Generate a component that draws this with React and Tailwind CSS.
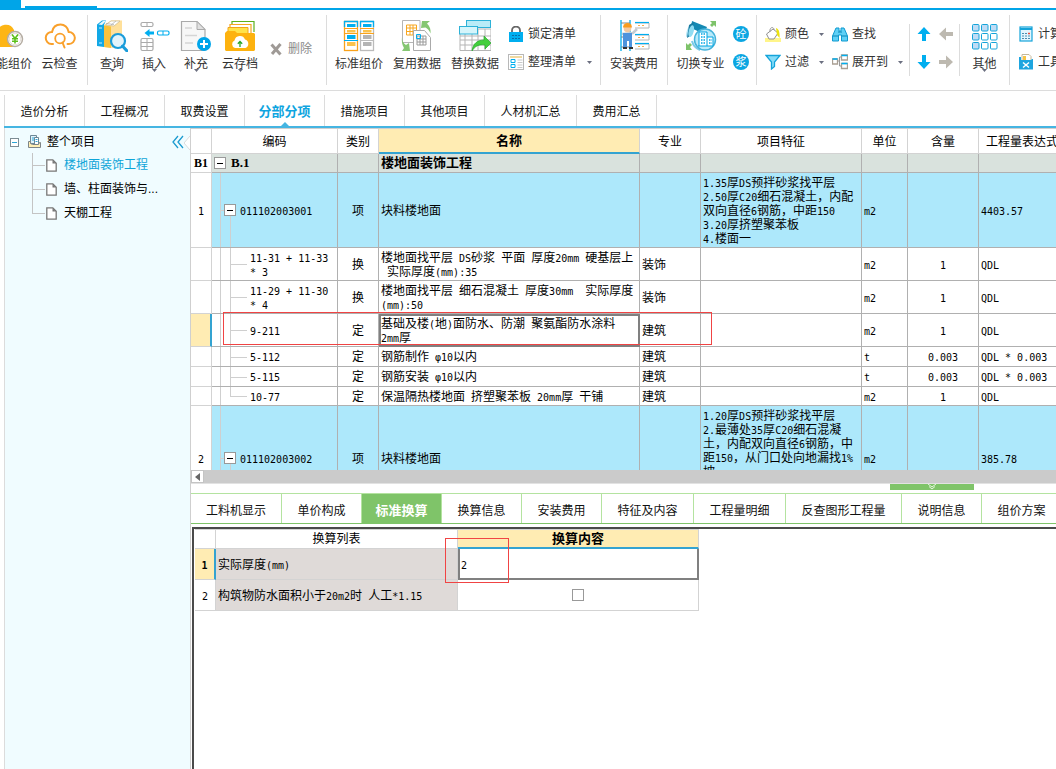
import React, { useState } from "react";

/* ---------- icons ---------- */

const Svg = ({ w = 32, h = 32, children }) => (
  <svg width={w} height={h} viewBox={`0 0 ${w} ${h}`} fill="none" aria-hidden="true" className="shrink-0">
    {children}
  </svg>
);

const SmartPriceIcon = () => (
  <Svg>
    <path d="M5 26a7 7 0 0 1 0-14 9 9 0 0 1 17-2v17H5z" fill="#fdb515" />
    <circle cx="23" cy="19" r="7.5" fill="#fff" stroke="#b5ada3" strokeWidth="1.5" />
    <circle cx="23" cy="19" r="5.8" stroke="#e5dfd8" />
    <path d="M20 14.5l3 4 3-4M23 18.5v5M20 18.8h6M20 21.2h6" stroke="#5cc01c" strokeWidth="1.6" />
  </Svg>
);

const CloudSearchIcon = () => (
  <Svg>
    <path d="M9 24H7.500a6 6 0 0 1 .5-12C9 7 12.500 4.500 16.500 4.500s7.500 3 8.200 7.500a6 6 0 0 1 .3 12h-1.500" stroke="#f9a02b" strokeWidth="2" strokeLinecap="round" />
    <circle cx="16" cy="18.500" r="4.800" stroke="#f9a02b" strokeWidth="1.800" />
    <path d="M18.500 22.500l2 5" stroke="#f9a02b" strokeWidth="2" strokeLinecap="round" />
  </Svg>
);

const BooksIcon = () => (
  <Svg>
    <path d="M1 4.500L6 0.500h4L8 5v22l-7-1z" fill="#12a8e6" />
    <path d="M2.500 4.500L7 1h3L6 5z" fill="#eaf7fd" />
    <path d="M3 8h3M3 23h3" stroke="#c9ecfb" />
    <path d="M8 5l7-4.500h11V24l-9 4-9-1z" fill="#ffe09a" />
    <path d="M9.500 5L15 1h9l-6 5z" fill="#fff" stroke="#c9b98e" strokeWidth="0.700" />
    <path d="M8 5.500l7 1V28l-7-1z" fill="#f9c23c" />
    <path d="M10 3.500l8 1M20 1l-5 4" stroke="#aaa" strokeWidth="0.700" />
    <circle cx="22" cy="21" r="7" fill="#e2f3fb" stroke="#1a9cda" strokeWidth="2.200" />
    <path d="M26.500 26l4.500 5" stroke="#1a9cda" strokeWidth="3" strokeLinecap="round" />
  </Svg>
);

const InsertIcon = () => (
  <Svg>
    <rect x="3" y="2.500" width="12" height="4" rx="1.500" stroke="#aaa" strokeWidth="1.200" />
    <path d="M9 2.500v4" stroke="#aaa" />
    <path d="M16 13H9" stroke="#00aeef" strokeWidth="3" />
    <path d="M6.500 13l5-4v8z" fill="#00aeef" />
    <rect x="19.500" y="11" width="11.500" height="4" rx="1.500" stroke="#00aeef" strokeWidth="1.200" />
    <path d="M25 11v4" stroke="#00aeef" />
    <rect x="3" y="18.500" width="12" height="12" rx="1.500" stroke="#aaa" strokeWidth="1.200" />
    <path d="M9 18.500v12M3 22.500h12M3 26.500h12" stroke="#aaa" />
  </Svg>
);

const SupplementIcon = () => (
  <Svg>
    <path d="M1.500 1.500H17l8 8v21H1.500z" fill="#f7f7f7" stroke="#aaa" strokeWidth="1.200" />
    <path d="M17 1.500v8h8z" fill="#e0e0e0" stroke="#aaa" />
    <path d="M5 8h7M5 15.500h12M5 23h8" stroke="#d5d5d5" strokeWidth="1.500" />
    <circle cx="24" cy="24" r="7" fill="#00a5ea" />
    <path d="M24 20v8M20 24h8" stroke="#fff" strokeWidth="2" />
  </Svg>
);

const CloudFolderIcon = () => (
  <Svg>
    <path d="M8 10V1.500h22V12" fill="#fff" stroke="#5db11d" strokeWidth="1.200" />
    <path d="M6 12V4.500h21V14" fill="#fff" stroke="#f5a623" strokeWidth="1.200" />
    <path d="M4 14V7.500h20V14" fill="#ffe34a" stroke="#f1a31c" />
    <path d="M1 13l2-2h8l2 2h17l1 1v16l-1 1H2l-1-1z" fill="#fdb20f" />
    <path d="M11 28a4 4 0 0 1-.5-7.500 5.500 5.500 0 0 1 10.500-1 4.500 4.500 0 0 1 .5 8.500z" fill="#fff" />
    <path d="M16 27v-5M13.800 23.700L16 21.500l2.200 2.200" stroke="#28a428" strokeWidth="1.300" />
  </Svg>
);

const DeleteIcon = () => (
  <Svg w={12} h={14}>
    <path d="M1.500 2.500l9 10M10.500 2L2 12" stroke="#9f9a96" strokeWidth="3" />
  </Svg>
);

const StandardPriceIcon = () => (
  <Svg>
    {[1, 17].map((x, i) => (
      <g key={x}>
        <rect x={x + 0.5} y="1.500" width="13" height="29" fill="#fff" stroke={i ? "#bbb" : "#f9a21b"} strokeWidth="1.300" />
        <path d={`M${x} 1.500h14M${x + 0.5} 1v6M${x + 13.5} 1v6`} stroke="#00aeef" strokeWidth="1.300" />
        <rect x={x + 3} y="4" width="8.500" height="3" fill="#00aeef" />
        <path d={`M${x} 8.500h14M${x} 13.500h14`} stroke="#f9a21b" />
        <rect x={x + 3} y="10" width="8.500" height="2.500" fill="#fbc24b" />
        <rect x={x + 3} y="15" width="8.500" height="4" fill={i ? "#b4b4b4" : "#00aeef"} />
        <path d={`M${x} 20.500h14`} stroke={i ? "#bbb" : "#00aeef"} />
        <rect x={x + 3} y="22" width="8.500" height="4" fill={i ? "#b4b4b4" : "#fbc24b"} />
      </g>
    ))}
  </Svg>
);

const ReuseIcon = () => (
  <Svg>
    <path d="M1.500 0.500H19v22H1.500z" fill="#fff" stroke="#b5b5b5" />
    <path d="M5.500 5h10v10h-10zM5.500 8h10M9 5v10M12 5v10M5.500 11.500h10" stroke="#f8a71e" />
    <path d="M12.500 10.500h11l6 7v13h-17z" fill="#fff" stroke="#aaa" />
    <path d="M16 16h9v9h-9zM16 19h9M19 16v9M22 16v9M16 22h9" stroke="#999" />
    <path d="M15.500 14.500h4v4h-4z" stroke="#00aeef" />
    <path d="M20 8l1-7h8l-3 2.500c3 3 4 6 3.500 10-1-3-3-5-5-6z" fill="#85c772" />
    <path d="M1 17c0 4 1 6 4 8l3-2 1 8H1l2-3C1 25 .5 21 1 17z" fill="#85c772" />
  </Svg>
);

const ReplaceIcon = () => (
  <Svg>
    <path d="M1 9h31v21.500H1zM1 16h31M1 20h31M1 25h31M6 9v21M13 9v21M19 9v21M26 9v21" stroke="#b5b5b5" />
    <rect x="7.500" y="0.500" width="24" height="7" fill="#b9ecf7" stroke="#2db2d8" />
    <rect x="0.500" y="6.500" width="18" height="7.500" fill="#d5f5fb" stroke="#2db2d8" />
    <path d="M13 31c1-8 6-11 12-11v-4l7 7-6 6v-4c-6-1-10 1-13 6z" fill="#43cf3c" stroke="#27a82b" strokeWidth="0.700" />
  </Svg>
);

const LockIcon = () => (
  <Svg w={16} h={16}>
    <path d="M4 7V4.500a4 4 0 0 1 8 0V7" stroke="#666" strokeWidth="1.800" />
    <rect x="1" y="6" width="14" height="10" fill="#00aeef" />
    <path d="M4 9.500h8M4 12.500h8" stroke="#0b6ea6" strokeDasharray="2 1" />
  </Svg>
);

const ArrangeIcon = () => (
  <Svg w={16} h={16}>
    <rect x="0.500" y="0.500" width="15" height="15" fill="#fff" stroke="#b8b8b8" />
    <path d="M2 3h12" stroke="#f0d9a0" strokeWidth="2" />
    <path d="M3 5.500h4v3H3zM3 10.500h4v3H3z" stroke="#00aeef" />
    <path d="M9.500 6h5M9.500 8.500h5M9.500 11h5M9.500 13.500h5" stroke="#c8c8c8" />
  </Svg>
);

const InstallIcon = () => (
  <Svg>
    <path d="M3 0v31M12 0v31" stroke="#00aeef" strokeWidth="1.300" />
    <path d="M3 3h9M3 17h9M3 27h9" stroke="#7a868d" />
    {[3, 15, 24].map((y) => (
      <g key={y}>
        <path d={`M17 ${y}h14v5H17`} stroke="#b5b5b5" />
        <path d={`M17 ${y - 0.5}h14`} stroke="#00aeef" strokeWidth="1.200" />
        <path d={`M20 ${y + 2.500}h8`} stroke="#f9b04a" strokeDasharray="2 2" />
      </g>
    ))}
    <circle cx="9.500" cy="8.500" r="3.800" fill="#f2c9a0" />
    <path d="M5 7.500a4.500 4.500 0 0 1 9 0z" fill="#f79b1e" />
    <path d="M4 14l11-1 4-4" stroke="#c3ccd2" strokeWidth="2.500" />
    <path d="M5 13h9v14h-3v-6H9v6H5z" fill="#4d93dd" />
    <path d="M5 28h4M11 28h4" stroke="#333" strokeWidth="2" />
  </Svg>
);

const SwitchIcon = () => (
  <Svg>
    <path d="M25 1h6v6l-2-2-2 2-2-2 2-2zM1 23l2 2 2-2 2 2-2 2 2 3H1z" fill="#7ec36a" />
    <path d="M7 3C3 6 1 11 1 17l7-3z" fill="#aee3f5" />
    <path d="M7 1l15 6-3 7L6 8z" fill="#1489b3" />
    <path d="M4 5l5-3-4 14-3 2z" fill="#1b7ba1" />
    <ellipse cx="6.500" cy="11" rx="2.500" ry="6" fill="#8fdcf2" transform="rotate(15 6 10)" />
    <path d="M7 21a13 13 0 0 0 8 9" stroke="#7ccbe8" strokeWidth="2" />
    <circle cx="20" cy="19.500" r="10.500" fill="#b9eafa" stroke="#47b3da" strokeWidth="1.500" />
    <path d="M14 26V12h8v14M22 17h6v9H13" fill="#fff" stroke="#00a5e2" />
    <path d="M16 14h4M16 17h4M16 20h4M16 23h4M24 20h3M24 23h3" stroke="#00a5e2" strokeDasharray="1.500 1" strokeWidth="1.500" />
  </Svg>
);

const PaintIcon = () => (
  <Svg w={16} h={16}>
    <rect x="0" y="12" width="16" height="4" fill="#fff58a" />
    <path d="M1.500 8l6.500-5 5 4-4 6H4z" fill="#fff" stroke="#8f8f8f" />
    <path d="M5 6c-1-5 4-6 4-2" stroke="#999" />
    <path d="M11 2c3 1 4 5 3.500 10L12 9z" fill="#ece20c" />
  </Svg>
);

const FilterIcon = () => (
  <Svg w={16} h={16}>
    <path d="M1 1.500h14L9.500 8v4.500L6.500 15V8z" fill="#85dcf8" stroke="#14a4da" strokeWidth="1.300" />
  </Svg>
);

const FindIcon = () => (
  <Svg w={16} h={16}>
    <path d="M4 2h3v3h2V2h3l3.500 8v5H9.500V9h-3v6H.5v-5z" fill="#5fd0f6" stroke="#0f9ad0" />
    <path d="M1 10h5M10 10h5M6 6h4" stroke="#0f86b6" />
  </Svg>
);

const ExpandIcon = () => (
  <Svg w={16} h={16}>
    <path d="M5 7h3M7.500 3v9M7.500 3h2M7.500 12h2" stroke="#999" />
    <path d="M.5 5h5v5h-5zM9.500 1h6v5h-6zM9.500 9.500h6v5h-6z" fill="#fff" stroke="#a99f93" strokeWidth="1.300" />
    <path d="M.5 5h5M9.500 1.500h6M9.500 9.500h6" stroke="#00aeef" strokeWidth="1.500" />
  </Svg>
);

const Arrow = ({ deg, color }) => (
  <svg width="16" height="16" viewBox="0 0 16 16" aria-hidden="true">
    <path d="M8 1l6.500 7H10v7H6V8H1.500z" fill={color} transform={`rotate(${deg} 8 8)`} />
  </svg>
);

const OtherIcon = () => (
  <Svg w={26} h={32}>
    {[0, 1, 2].map((r) =>
      [0, 1, 2].map((c) => (
        <rect key={`${r}${c}`} x={c * 9 + 0.5} y={r * 9 + 4.5} width="6.500" height="6.500" rx="1" fill={r === 0 || c === 0 ? "#bfdcf5" : "#fff"} stroke="#14a4da" />
      ))
    )}
  </Svg>
);

const CalcIcon = () => (
  <Svg w={16} h={16}>
    <rect x="2" y="1" width="12" height="14" fill="#e4f6fd" stroke="#14a4da" strokeWidth="1.200" />
    <path d="M2 3h12" stroke="#14a4da" strokeWidth="2" />
    <path d="M4 7.500h8M4 10h8M4 12.500h8" stroke="#4d8fb0" strokeDasharray="2 1" />
    <path d="M10 7.500h2" stroke="#f04a3a" strokeWidth="1.500" />
  </Svg>
);

const ToolIcon = () => (
  <Svg w={16} h={16}>
    <path d="M4 .5h7l2 2v5H4z" fill="#fff" stroke="#c4b89a" />
    <path d="M5 2h3v4H5z" fill="#f7c544" />
    <path d="M1 3h2v3h10.500V5H15v10.500H1z" fill="#1ea5df" />
    <path d="M5 8.500l6 5M11 8.500l-6 5" stroke="#fff" strokeWidth="1.500" />
  </Svg>
);

const ProjectIcon = () => (
  <Svg w={14} h={14}>
    <path d="M2.500.5h6v8h-6z" fill="#dff3fb" stroke="#6b8795" />
    <path d="M4 3h3M4 5h5" stroke="#2ba5d6" />
    <path d="M6.500 2.500h4v7h-4z" fill="#fff" stroke="#6b8795" />
    <path d="M7.500 4.500h2M7.500 6.500h2" stroke="#2ba5d6" />
    <path d="M.5 6.500h2v2l2 1h6l1-2h1v5h-12z" fill="#ffefb5" stroke="#7d8588" />
  </Svg>
);

const FileIcon = () => (
  <Svg w={11} h={13}>
    <path d="M.8.8h6l3.400 3.400v8H.8z" fill="#fff" stroke="#777" strokeWidth="1.300" />
    <path d="M6.500 1v3.500h3.500z" fill="#777" />
  </Svg>
);

const Caret = () => (
  <svg width="5" height="3" viewBox="0 0 5 3" aria-hidden="true" className="shrink-0">
    <path d="M0 0h5L2.500 3z" fill="#6b6f80" />
  </svg>
);

/* Sets runs of Latin text in the half-width face used by the grids. */
const Half = ({ children = "" }) =>
  children.split(/([\x20-\x7eφ]+)/).map((part, i) =>
    i % 2 ? (
      <span key={i} className="font-['DejaVu_Sans_Mono',monospace] text-[10px] leading-none">
        {part}
      </span>
    ) : (
      part
    )
  );

/* ---------- ribbon ---------- */

const Big = ({ icon, label, width, menu }) => (
  <button type="button" className={`relative flex shrink-0 flex-col items-center gap-[5px] pt-[10px] ${width}`}>
    {icon}
    <span className="h-[14px]">{label}</span>
    {menu && (
      <span className="absolute top-[59px] leading-none">
        <Caret />
      </span>
    )}
  </button>
);

const Small = ({ icon, label, menu, width = "" }) => (
  <button type="button" className={`flex h-4 shrink-0 items-center gap-1 ${width}`}>
    {icon}
    <span>{label}</span>
    {menu && (
      <span className="ml-auto">
        <Caret />
      </span>
    )}
  </button>
);

const Sep = () => <div className="mt-[5px] h-[70px] w-px shrink-0 bg-[#dcdcdc]" />;
const ShortSep = () => <div className="mt-[14px] h-[52px] w-px shrink-0 bg-[#dcdcdc]" />;

const RoundMark = ({ children }) => (
  <button type="button" className="size-4 rounded-full bg-[#0ba6e2] text-center text-[11px] leading-4 text-white">
    {children}
  </button>
);

const Ribbon = () => (
  <div className="flex h-[80px] shrink-0 items-start overflow-hidden text-[#333]">
    <Big icon={<SmartPriceIcon />} label="智能组价" width="-ml-4 w-12" />
    <Big icon={<CloudSearchIcon />} label="云检查" width="w-[55px]" />
    <Sep />
    <div className="flex shrink-0 pl-[3px]">
      <Big icon={<BooksIcon />} label="查询" width="w-[42px]" menu />
      <Big icon={<InsertIcon />} label="插入" width="w-[42px]" menu />
      <Big icon={<SupplementIcon />} label="补充" width="w-[42px]" menu />
      <Big icon={<CloudFolderIcon />} label="云存档" width="w-[46px]" menu />
      <button type="button" className="mt-[31px] flex h-4 w-[63px] items-center gap-[6px] pl-[7px] text-[#8a8a8a]">
        <DeleteIcon />
        <span>删除</span>
      </button>
    </div>
    <Sep />
    <div className="flex shrink-0 pl-[3px]">
      <Big icon={<StandardPriceIcon />} label="标准组价" width="w-[58px]" />
      <Big icon={<ReuseIcon />} label="复用数据" width="w-[58px]" />
      <Big icon={<ReplaceIcon />} label="替换数据" width="w-[58px]" />
      <div className="flex w-[96px] flex-col gap-3 pl-1 pt-4">
        <Small icon={<LockIcon />} label="锁定清单" />
        <Small icon={<ArrangeIcon />} label="整理清单" menu width="w-[84px]" />
      </div>
    </div>
    <Sep />
    <Big icon={<InstallIcon />} label="安装费用" width="w-[66px]" menu />
    <Sep />
    <Big icon={<SwitchIcon />} label="切换专业" width="w-[65px]" />
    <div className="flex w-[23px] shrink-0 flex-col gap-3 pt-4">
      <RoundMark>砼</RoundMark>
      <RoundMark>浆</RoundMark>
    </div>
    <Sep />
    <div className="grid shrink-0 grid-cols-[67px_77px] gap-y-3 pl-2 pt-4">
      <Small icon={<PaintIcon />} label="颜色" menu width="w-[59px]" />
      <Small icon={<FindIcon />} label="查找" />
      <Small icon={<FilterIcon />} label="过滤" menu width="w-[59px]" />
      <Small icon={<ExpandIcon />} label="展开到" menu width="w-[71px]" />
    </div>
    <ShortSep />
    <div className="grid w-[49px] shrink-0 grid-cols-[22px_16px] gap-y-3 pl-[6px] pt-4">
      <button type="button" aria-label="上移"><Arrow deg={0} color="#00aeef" /></button>
      <button type="button" aria-label="左移"><Arrow deg={-90} color="#bdb9b0" /></button>
      <button type="button" aria-label="下移"><Arrow deg={180} color="#00aeef" /></button>
      <button type="button" aria-label="右移"><Arrow deg={90} color="#bdb9b0" /></button>
    </div>
    <ShortSep />
    <Big icon={<OtherIcon />} label="其他" width="w-[49px]" menu />
    <Sep />
    <div className="flex shrink-0 flex-col gap-3 pl-2 pt-4">
      <Small icon={<CalcIcon />} label="计算器" />
      <Small icon={<ToolIcon />} label="工具" />
    </div>
  </div>
);

/* ---------- tabs ---------- */

const MAIN_TABS = ["造价分析", "工程概况", "取费设置", "分部分项", "措施项目", "其他项目", "人材机汇总", "费用汇总"];

const MainTabs = () => (
  <div role="tablist" className="ml-1 flex h-[37px] shrink-0 border-b-2 border-[#45b5e2] pt-1">
    {MAIN_TABS.map((t) => {
      const active = t === "分部分项";
      return (
        <button
          key={t}
          type="button"
          role="tab"
          aria-selected={active}
          className={`relative shrink-0 border-r border-[#dcdcdc] pt-[2px] ${t.length === 5 ? "w-[92px]" : "w-20"} ${active ? "text-[13px] font-bold text-[#0ea5e0]" : "text-[#111]"} first:w-[81px] first:border-l`}
        >
          {t}
          {active && (
            <svg width="8" height="4" viewBox="0 0 8 4" className="absolute bottom-0 left-9" aria-hidden="true">
              <path d="M4 0l4 4H0z" fill="#45b5e2" />
            </svg>
          )}
        </button>
      );
    })}
  </div>
);

const DETAIL_TABS = [
  ["工料机显示", "w-[91px]"],
  ["单价构成", "w-20"],
  ["标准换算", "w-20"],
  ["换算信息", "w-20"],
  ["安装费用", "w-20"],
  ["特征及内容", "w-[92px]"],
  ["工程量明细", "w-[92px]"],
  ["反查图形工程量", "w-[116px]"],
  ["说明信息", "w-20"],
  ["组价方案", "w-20"],
];

const DetailTabs = () => (
  <div role="tablist" className="flex h-[31px] shrink-0 overflow-hidden border-b border-t border-b-[#7fc469] border-t-[#b4e3a0]">
    {DETAIL_TABS.map(([t, w]) => {
      const active = t === "标准换算";
      return (
        <button
          key={t}
          type="button"
          role="tab"
          aria-selected={active}
          className={`shrink-0 border-r border-[#b4e3a0] pt-1 ${w} ${active ? "bg-[#7fc469] text-[13px] font-bold text-white" : "text-[#111]"}`}
        >
          {t}
        </button>
      );
    })}
  </div>
);

/* ---------- sidebar ---------- */

const TREE = ["楼地面装饰工程", "墙、柱面装饰与...", "天棚工程"];

const Sidebar = () => (
  <aside className="relative ml-1 w-[186px] shrink-0 border-l border-[#dcdcdc] bg-[#f0fcff] pt-[3px]">
    <div className="flex h-[22px] items-center pl-[5px]">
      <button type="button" aria-label="折叠" className="flex size-[9px] items-center justify-center border border-[#7c8c94] bg-white">
        <span className="h-px w-[5px] bg-[#2ba5d6]" />
      </button>
      <span className="ml-[9px]"><ProjectIcon /></span>
      <span className="ml-[5px]">整个项目</span>
      <button type="button" aria-label="收起" className="ml-auto mr-[6px]">
        <svg width="12" height="14" viewBox="0 0 12 14" fill="none">
          <path d="M6 1L1 7l5 6M11 1L6 7l5 6" stroke="#1b9bd0" strokeWidth="1.300" />
        </svg>
      </button>
    </div>
    <ul>
      {TREE.map((t, i) => (
        <li key={t} className="relative flex h-6 items-center pl-[41px]">
          <span className={`absolute left-[27px] top-0 w-px bg-[#c4c4c4] ${i === 2 ? "h-3" : "h-6"}`} />
          <span className="absolute left-[27px] top-3 h-px w-[13px] bg-[#c4c4c4]" />
          <FileIcon />
          <a href="#tree" className={`ml-[7px] ${i === 0 ? "text-[#0ea5d8]" : ""}`}>{t}</a>
        </li>
      ))}
    </ul>
    <svg width="6" height="14" viewBox="0 0 6 14" className="absolute right-0 top-2" aria-hidden="true">
      <path d="M6 0L0 7l6 7z" fill="#fff" />
      <path d="M6 0L0 7l6 7" fill="none" stroke="#dcdcdc" />
    </svg>
  </aside>
);

/* ---------- bill of quantities ---------- */

const ROWS = [
  { n: "B1", kind: "group", h: "h-[19px]", code: "B.1", name: "楼地面装饰工程" },
  {
    n: "1", kind: "item", h: "h-[75px]", code: "011102003001", type: "项", name: "块料楼地面", unit: "m2", expr: "4403.57",
    feature: "1.35厚DS预拌砂浆找平层\n2.50厚C20细石混凝土，内配\n双向直径6钢筋，中距150\n3.20厚挤塑聚苯板\n4.楼面一",
  },
  { kind: "leaf", h: "h-[33px]", code: "11-31 + 11-33\n* 3", type: "换", name: "楼地面找平层 DS砂浆 平面 厚度20mm 硬基层上\n 实际厚度(mm):35", major: "装饰", unit: "m2", qty: "1", expr: "QDL" },
  { kind: "leaf", h: "h-[33px]", code: "11-29 + 11-30\n* 4", type: "换", name: "楼地面找平层 细石混凝土 厚度30mm  实际厚度\n(mm):50", major: "装饰", unit: "m2", qty: "1", expr: "QDL" },
  { kind: "leaf", h: "h-[33px]", selected: true, code: "9-211", type: "定", name: "基础及楼(地)面防水、防潮 聚氨酯防水涂料\n2mm厚", major: "建筑", unit: "m2", qty: "1", expr: "QDL" },
  { kind: "leaf", h: "h-[20px]", code: "5-112", type: "定", name: "钢筋制作 φ10以内", major: "建筑", unit: "t", qty: "0.003", expr: "QDL * 0.003" },
  { kind: "leaf", h: "h-[20px]", code: "5-115", type: "定", name: "钢筋安装 φ10以内", major: "建筑", unit: "t", qty: "0.003", expr: "QDL * 0.003" },
  { kind: "leaf", h: "h-[19px]", last: true, code: "10-77", type: "定", name: "保温隔热楼地面 挤塑聚苯板 20mm厚 干铺", major: "建筑", unit: "m2", qty: "1", expr: "QDL" },
  {
    n: "2", kind: "item", h: "h-[105px]", top: true, code: "011102003002", type: "项", name: "块料楼地面", unit: "m2", expr: "385.78",
    feature: "1.20厚DS预拌砂浆找平层\n2.最薄处35厚C20细石混凝\n土，内配双向直径6钢筋，中\n距150，从门口处向地漏找1%\n坡",
  },
];

const ToggleBox = ({ className }) => (
  <button type="button" aria-label="折叠" className={`absolute top-1/2 -mt-[6px] flex size-3 items-center justify-center border border-[#999] bg-white ${className}`}>
    <span className="h-px w-[6px] bg-black" />
  </button>
);

const CodeCell = ({ row }) => {
  const line = "absolute bg-[#cfcfcf]";
  if (row.kind === "group")
    return (
      <>
        <ToggleBox className="left-[2px]" />
        <span className="block pl-[19px] font-['Liberation_Serif',serif] text-[13px] font-bold">{row.code}</span>
      </>
    );
  if (row.kind === "item")
    return (
      <>
        <span className={`${line} left-2 inset-y-0 w-px`} />
        <span className={`${line} left-2 top-1/2 h-px w-1`} />
        <span className={`${line} left-[18px] bottom-0 top-1/2 w-px`} />
        <ToggleBox className="left-3" />
        <span className="block pl-7"><Half>{row.code}</Half></span>
      </>
    );
  return (
    <>
      <span className={`${line} left-2 inset-y-0 w-px`} />
      <span className={`${line} left-[18px] top-0 w-px ${row.last ? "h-1/2" : "h-full"}`} />
      <span className={`${line} left-[18px] top-1/2 h-px w-[17px]`} />
      <span className="block whitespace-pre pl-[38px]"><Half>{row.code.split("\n")[0]}</Half></span>
      {row.code.includes("\n") && (
        <span className="block whitespace-pre pl-[38px]"><Half>{row.code.split("\n")[1]}</Half></span>
      )}
    </>
  );
};

const HEADS = ["", "编码", "类别", "名称", "专业", "项目特征", "单位", "含量", "工程量表达式"];
const COLS = ["w-[21px]", "w-[126px]", "w-[41px]", "w-[261px]", "w-[61px]", "w-[161px]", "w-[46px]", "w-[71px]", "w-[87px]"];

const BillTable = () => (
  <div className="relative h-[342px] shrink-0 overflow-hidden border-t border-[#cfcfcf]">
    <table className="w-[875px] min-w-full table-fixed border-separate border-spacing-0">
      <colgroup>
        {COLS.map((c) => (
          <col key={c} className={c} />
        ))}
      </colgroup>
      <thead>
        <tr className="h-[25px]">
          {HEADS.map((t) => (
            <th
              key={t}
              scope="col"
              className={
                t === "名称"
                  ? "border-b-2 border-r border-b-[#34a3d1] border-r-[#d3d3d3] bg-[#ffecb3] p-0 text-[13px] font-bold"
                  : "border-b border-r border-[#d3d3d3] p-0 pt-px font-normal whitespace-nowrap"
              }
            >
              {t}
            </th>
          ))}
        </tr>
      </thead>
      <tbody>
        {ROWS.map((r) => {
          const bg = r.kind === "group" ? "bg-[#d9e2dd]" : r.kind === "item" ? "bg-[#ade8fb]" : "bg-white";
          const cell = `border-b border-r border-[#b0b0b0] ${r.kind === "group" ? "p-0" : "p-0 pt-px"}`;
          return (
            <tr key={r.code} className={`${r.h} ${bg}`}>
              <td
                className={
                  r.selected
                    ? "border-b border-r-2 border-b-[#d3d3d3] border-r-[#34a3d1] bg-[#ffecb3] p-0"
                    : `border-b border-r border-[#d3d3d3] bg-white p-0 text-center ${r.kind === "group" ? "font-['Liberation_Serif',serif] font-bold" : "pt-px"}`
                }
              >
                {r.kind === "group" ? r.n : <Half>{r.n}</Half>}
              </td>
              <td className={`relative ${cell}`}><CodeCell row={r} /></td>
              <td className={`text-center ${cell}`}>{r.type}</td>
              <td
                className={`whitespace-pre ${
                  r.selected
                    ? "border-2 border-[#808080] p-0"
                    : `${cell} pl-[2px] ${r.kind === "group" ? "text-[13px] font-bold" : ""}`
                }`}
              >
                <Half>{r.name}</Half>
              </td>
              <td className={`${cell} pl-[2px]`}>{r.major}</td>
              <td className={`whitespace-pre border-b border-r border-[#b0b0b0] p-0 pl-[2px] ${r.top ? "pt-[3px] align-top" : "pt-px"}`}>
                <Half>{r.feature}</Half>
              </td>
              <td className={`${cell} pl-[2px]`}><Half>{r.unit}</Half></td>
              <td className={`text-center ${cell}`}><Half>{r.qty}</Half></td>
              <td className={`whitespace-nowrap ${cell} pl-[2px]`}><Half>{r.expr}</Half></td>
            </tr>
          );
        })}
      </tbody>
    </table>
    <div className="pointer-events-none absolute left-8 top-[183px] h-[33px] w-[489px] border border-[#f04444]" />
  </div>
);

const HorizontalScroll = () => (
  <div className="flex h-[14px] shrink-0 border-b border-[#e2e2e2] bg-[#cbcbcb]">
    <button type="button" aria-label="向左滚动" className="flex w-[13px] items-center justify-center border border-[#c4c4c4] bg-white">
      <svg width="5" height="8" viewBox="0 0 5 8" aria-hidden="true">
        <path d="M5 0v8L0 4z" fill="#666" />
      </svg>
    </button>
  </div>
);

/* ---------- conversion panel ---------- */

const Conversion = () => {
  const [thickness, setThickness] = useState("2");
  const [small, setSmall] = useState(false);
  return (
    <div className="relative ml-px mt-[3px] grow border-l-2 border-t-2 border-[#4a4a4a] pl-px">
      <table className="w-[504px] table-fixed border-separate border-spacing-0 border-t border-[#d3d3d3]">
        <colgroup>
          <col className="w-[21px]" />
          <col className="w-[242px]" />
          <col className="w-[241px]" />
        </colgroup>
        <thead>
          <tr className="h-[19px]">
            <th className="border-b border-r border-[#d3d3d3] p-0" />
            <th scope="col" className="border-b border-r border-[#d3d3d3] p-0 font-normal">换算列表</th>
            <th scope="col" className="border-b-2 border-r border-b-[#34a3d1] border-r-[#d3d3d3] bg-[#ffecb3] p-0 text-[13px] font-bold">换算内容</th>
          </tr>
        </thead>
        <tbody>
          <tr className="h-[31px]">
            <td className="border-b border-r-2 border-b-[#d3d3d3] border-r-[#34a3d1] bg-[#ffecb3] p-0 pt-[2px] text-center font-bold"><Half>1</Half></td>
            <td className="border-b border-r border-[#d3d3d3] bg-[#dfdad8] p-0 pl-[2px] pt-[2px]">
              <label htmlFor="thickness"><Half>实际厚度(mm)</Half></label>
            </td>
            <td className="p-0">
              <input
                id="thickness"
                value={thickness}
                onChange={(e) => setThickness(e.target.value)}
                className="block h-[31px] w-full border-2 border-t-0 border-[#808080] bg-white px-px pt-1 font-['DejaVu_Sans_Mono',monospace] text-[10px] outline-none"
              />
            </td>
          </tr>
          <tr className="h-[31px]">
            <td className="border-b border-r border-[#d3d3d3] p-0 pt-[2px] text-center"><Half>2</Half></td>
            <td className="border-b border-r border-[#d3d3d3] bg-[#dfdad8] p-0 pl-[2px] pt-[2px]">
              <label htmlFor="small-area"><Half>构筑物防水面积小于20m2时 人工*1.15</Half></label>
            </td>
            <td className="border-b border-r border-[#d3d3d3] p-0">
              <input
                id="small-area"
                type="checkbox"
                checked={small}
                onChange={(e) => setSmall(e.target.checked)}
                className="mx-auto block size-3 appearance-none border border-[#999] bg-white checked:bg-[#34a3d1]"
              />
            </td>
          </tr>
        </tbody>
      </table>
      <div className="pointer-events-none absolute left-[251px] top-[9px] h-[45px] w-16 border border-[#f04444]" />
    </div>
  );
};

/* ---------- page ---------- */

export default function App() {
  return (
    <div className="flex h-screen flex-col overflow-hidden bg-white font-['Liberation_Sans','Noto_Sans_CJK_SC',sans-serif] text-[12px] leading-[14px] text-black">
      <div className="flex h-[10px] shrink-0 items-end border-b-2 border-[#00a5e8]">
        <div className="h-2 w-[21px] bg-[#00a5e8]" />
        <div className="ml-1 h-[2px] w-[72px] bg-[#00a5e8]" />
      </div>
      <Ribbon />
      <div className="h-px shrink-0 bg-[#dcdcdc]" />
      <MainTabs />
      <div className="flex min-h-0 grow">
        <Sidebar />
        <main className="flex min-w-0 grow flex-col border-l border-[#cfcfcf]">
          <BillTable />
          <HorizontalScroll />
          <div className="flex h-[9px] shrink-0 justify-end pr-[82px]">
            <button type="button" aria-label="收起明细" className="flex h-[6px] w-[84px] justify-center bg-[#7fc469]">
              <svg width="10" height="6" viewBox="0 0 10 6" fill="none" aria-hidden="true">
                <path d="M1 0l4 3 4-3M2 2.500l3 2.500 3-2.500" stroke="#e6f6e0" />
              </svg>
            </button>
          </div>
          <DetailTabs />
          <Conversion />
        </main>
      </div>
    </div>
  );
}
